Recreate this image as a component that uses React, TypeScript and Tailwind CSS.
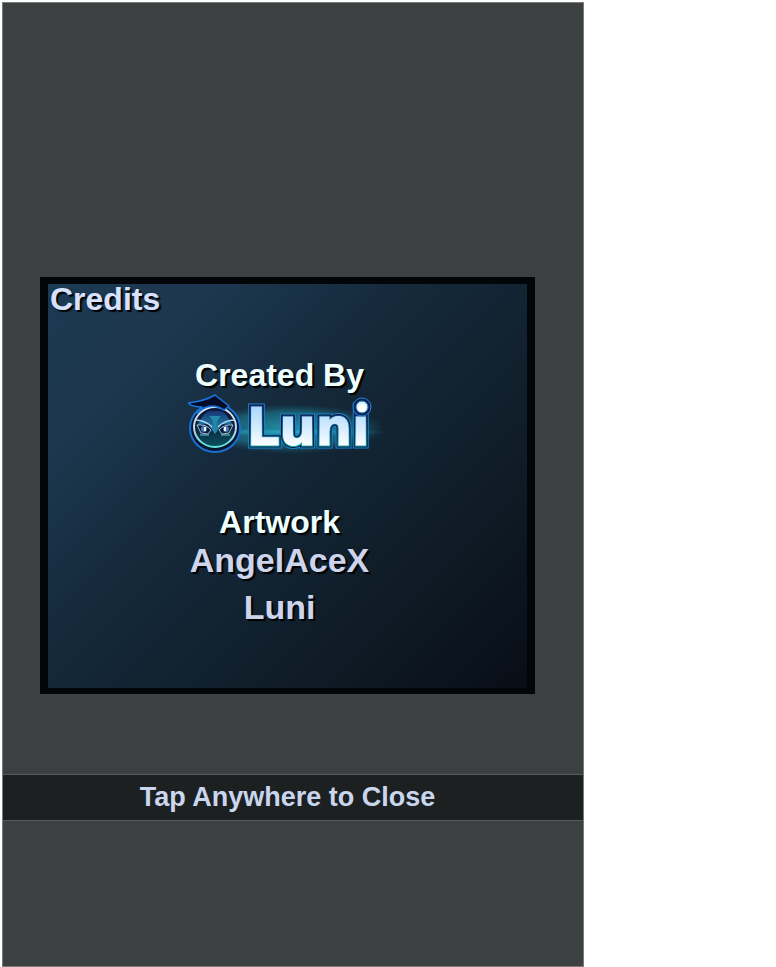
function LuniLogo() {
  return (
    <svg viewBox="187 392 200 72" className="block h-[72px] w-[200px]" role="img" aria-label="Luni">
      <defs>
        <linearGradient id="letter" gradientUnits="userSpaceOnUse" x1="0" y1="407" x2="0" y2="447">
          <stop offset="0" stopColor="#a9d8fb" />
          <stop offset="0.5" stopColor="#d3ebff" />
          <stop offset="1" stopColor="#ffffff" />
        </linearGradient>
        <linearGradient id="rim" gradientUnits="userSpaceOnUse" x1="0" y1="405" x2="0" y2="449">
          <stop offset="0" stopColor="#1a2c86" />
          <stop offset="0.45" stopColor="#17608f" />
          <stop offset="1" stopColor="#18b9b2" />
        </linearGradient>
        <linearGradient id="face" x1="0" y1="0" x2="0" y2="1">
          <stop offset="0" stopColor="#0b1436" />
          <stop offset="0.5" stopColor="#0d2438" />
          <stop offset="1" stopColor="#075362" />
        </linearGradient>
        <linearGradient id="ring" x1="0" y1="0" x2="0" y2="1">
          <stop offset="0" stopColor="#dce9ff" />
          <stop offset="0.6" stopColor="#b4d5ed" />
          <stop offset="1" stopColor="#5fe4dd" />
        </linearGradient>
        <linearGradient id="wing" x1="0" y1="0" x2="0" y2="1">
          <stop offset="0" stopColor="#153577" />
          <stop offset="1" stopColor="#2799b8" />
        </linearGradient>
        <radialGradient id="glow">
          <stop offset="0" stopColor="#28b8d0" stopOpacity="0.75" />
          <stop offset="0.7" stopColor="#1f8ca4" stopOpacity="0.5" />
          <stop offset="1" stopColor="#156078" stopOpacity="0" />
        </radialGradient>
      </defs>
      <ellipse cx="290" cy="429" rx="94" ry="25" fill="url(#glow)" />
      <ellipse cx="288" cy="432" rx="98" ry="4" fill="url(#glow)" />
      <text
        x="246"
        y="445"
        className="font-['DejaVu_Sans',sans-serif] text-[51px] font-bold"
        strokeLinejoin="miter"
      >
        <tspan x="246" fill="#1b83d2" stroke="#1b83d2" strokeWidth="7" aria-hidden="true">Luni</tspan>
        <tspan x="246" fill="#07182f" stroke="#07182f" strokeWidth="5" aria-hidden="true">Luni</tspan>
        <tspan x="246" fill="url(#rim)" stroke="url(#rim)" strokeWidth="3" aria-hidden="true">Luni</tspan>
        <tspan x="246" fill="url(#letter)" stroke="url(#letter)" strokeWidth="1">Luni</tspan>
      </text>
      <circle cx="361" cy="407" r="9" fill="#0a2050" stroke="#2388dc" />
      <circle cx="361" cy="407" r="6" fill="#d9efff" stroke="#1f7fb4" />
      <circle cx="361" cy="408" r="4" fill="#ffffff" />

      <ellipse cx="214" cy="428" rx="25" ry="24" fill="#08152d" stroke="#1b70d4" strokeWidth="2" />
      <ellipse cx="214" cy="427" rx="21" ry="20" fill="url(#face)" stroke="url(#ring)" strokeWidth="2" />
      <path d="M202 416Q206 410 214 411Q222 410 226 416L232 425L221 424L214 434L207 424L196 425Z" fill="url(#wing)" />
      <path d="M208 416Q213 420 214 433Q215 420 220 416Z" fill="#2389a8" />
      <path d="M194 420Q204 420 211 427M234 420Q224 420 217 427" fill="none" stroke="#a9d5ed" strokeWidth="1.5" />
      <path d="M196 425Q205 424 210 430L207 434L200 433ZM232 425Q223 424 218 430L221 434L228 433Z" fill="#101b38" stroke="#a4bfdf" />
      <circle cx="203" cy="429" r="3" fill="#4f79bd" />
      <circle cx="225" cy="429" r="3" fill="#4f79bd" />
      <path d="M204 427V431M224 427V431" stroke="#effaff" strokeWidth="2" />
      <path d="M199 435H208M220 435H229" stroke="#6ec9ce" />
      <path d="M187 403Q204 401 214 395L228 406L223 410Q209 401 196 413L201 407Q191 407 187 403Z" fill="#050d26" stroke="#1974df" strokeWidth="1.5" strokeLinejoin="round" />
    </svg>
  );
}

export default function App() {
  return (
    <div className="flex min-h-screen bg-white pt-0.5 pl-0.5 font-['Liberation_Sans',Arial,sans-serif] font-bold">
      <main className="flex w-[75.2%] flex-col border border-[#777b7b] bg-[#3d4041] pt-[274px]">
        <section className="mr-12 ml-[37px] border-x-8 border-t-7 border-b-6 border-[#030608] bg-[linear-gradient(135deg,#1d3a54_0%,#1c364d_22%,#152a3c_40%,#0f1c27_72%,#080d15_100%)] bg-origin-border pb-[57px]">
          <h1 className="pl-0.5 text-[32px] leading-[30px] text-[#d8e2ff] [text-shadow:2px_2px_1px_#000]">Credits</h1>
          <div className="flex flex-col items-center pt-[43px] pr-4 text-center">
            <h2 className="text-[32px] leading-9 text-[#edffff] [text-shadow:2px_2px_1px_#000]">Created By</h2>
            <div className="-mt-px pl-4">
              <LuniLogo />
            </div>
            <h2 className="mt-10 text-[32px] leading-9 text-[#edffff] [text-shadow:2px_2px_1px_#000]">Artwork</h2>
            <ul className="-mt-[3px] text-[34px] leading-[47px] text-[#ccd4ee] [text-shadow:2px_2px_1px_#000]">
              <li>AngelAceX</li>
              <li>Luni</li>
            </ul>
          </div>
        </section>
        <button
          type="button"
          className="mt-20 h-[47px] border-y border-[#565b5b] bg-[#1c2020] pr-[11px] text-[27px] leading-none text-[#c9d6ee]"
        >
          Tap Anywhere to Close
        </button>
      </main>
    </div>
  );
}
